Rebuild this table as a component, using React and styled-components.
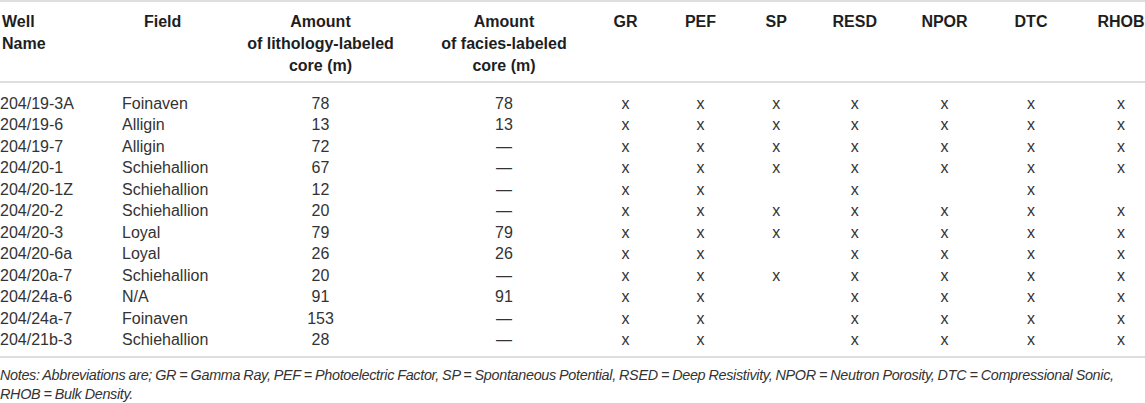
import React from "react";
import styled, { createGlobalStyle } from "styled-components";

const Global = createGlobalStyle`
  html, body { margin: 0; padding: 0; background: #fff; overflow: hidden; }
  body { font-family: "Liberation Sans", Arial, sans-serif; color: #2b2b2b; }
`;

const Wrap = styled.div`
  width: 1145px;
  overflow: hidden;
`;

const Table = styled.table`
  width: 1174px;
  table-layout: fixed;
  border-collapse: collapse;
  border-top: 2px solid #dedede;
`;

const HeadRow = styled.tr`
  border-bottom: 2px solid #dedede;
`;

const Th = styled.th`
  font-size: 16px;
  line-height: 22px;
  font-weight: 700;
  color: #1e1e1e;
  vertical-align: top;
  padding: 9px ${(p) => (p.$first ? "0" : "6px")} 4px
    ${(p) => (p.$indent != null ? `${p.$indent}px` : p.$first ? "2px" : "6px")};
  text-align: ${(p) => p.$align || "center"};
  white-space: nowrap;
`;

const BodyRow = styled.tr`
  &:first-child td { padding-top: 10px; }
  &:last-child td { padding-bottom: 6px; }
  &:last-child { border-bottom: 2px solid #dedede; }
`;

const Td = styled.td`
  font-size: 16px;
  line-height: 21.45px;
  color: #333;
  padding: 0 ${(p) => (p.$first ? "0" : "6px")};
  text-align: ${(p) => p.$align || "center"};
  white-space: nowrap;
`;

const Notes = styled.p`
  margin: 0;
  padding: 8px 0 0 0;
  font-size: 14.4px;
  letter-spacing: -0.32px;
  word-spacing: -0.5px;
  line-height: 19px;
  font-style: italic;
  color: #333;
  width: 1130px;
`;

const widths = [116, 105, 199, 168, 75, 75, 76.5, 80.5, 99, 74, 106];

const logs = ["GR", "PEF", "SP", "RESD", "NPOR", "DTC", "RHOB"];

const rows = [
  ["204/19-3A", "Foinaven", "78", "78", "1111111"],
  ["204/19-6", "Alligin", "13", "13", "1111111"],
  ["204/19-7", "Alligin", "72", "—", "1111111"],
  ["204/20-1", "Schiehallion", "67", "—", "1111111"],
  ["204/20-1Z", "Schiehallion", "12", "—", "1101010"],
  ["204/20-2", "Schiehallion", "20", "—", "1111111"],
  ["204/20-3", "Loyal", "79", "79", "1111111"],
  ["204/20-6a", "Loyal", "26", "26", "1101111"],
  ["204/20a-7", "Schiehallion", "20", "—", "1111111"],
  ["204/24a-6", "N/A", "91", "91", "1101111"],
  ["204/24a-7", "Foinaven", "153", "—", "1101111"],
  ["204/21b-3", "Schiehallion", "28", "—", "1101111"],
];

export default function App() {
  return (
    <Wrap>
      <Global />
      <Table>
        <colgroup>
          {widths.map((w, i) => (
            <col key={i} style={{ width: `${w}px` }} />
          ))}
        </colgroup>
        <thead>
          <HeadRow>
            <Th $first $align="left">
              Well
              <br />
              Name
            </Th>
            <Th $align="left" $indent={28}>
              Field
            </Th>
            <Th>
              Amount
              <br />
              of lithology-labeled
              <br />
              core (m)
            </Th>
            <Th>
              Amount
              <br />
              of facies-labeled
              <br />
              core (m)
            </Th>
            {logs.map((l) => (
              <Th key={l}>{l}</Th>
            ))}
          </HeadRow>
        </thead>
        <tbody>
          {rows.map((r) => (
            <BodyRow key={r[0]}>
              <Td $first $align="left">
                {r[0]}
              </Td>
              <Td $align="left">{r[1]}</Td>
              <Td>{r[2]}</Td>
              <Td>{r[3]}</Td>
              {r[4].split("").map((c, i) => (
                <Td key={i}>{c === "1" ? "x" : ""}</Td>
              ))}
            </BodyRow>
          ))}
        </tbody>
      </Table>
      <Notes>
        Notes: Abbreviations are; GR = Gamma Ray, PEF = Photoelectric Factor, SP = Spontaneous
        Potential, RSED = Deep Resistivity, NPOR = Neutron Porosity, DTC = Compressional Sonic,
        RHOB = Bulk Density.
      </Notes>
    </Wrap>
  );
}
